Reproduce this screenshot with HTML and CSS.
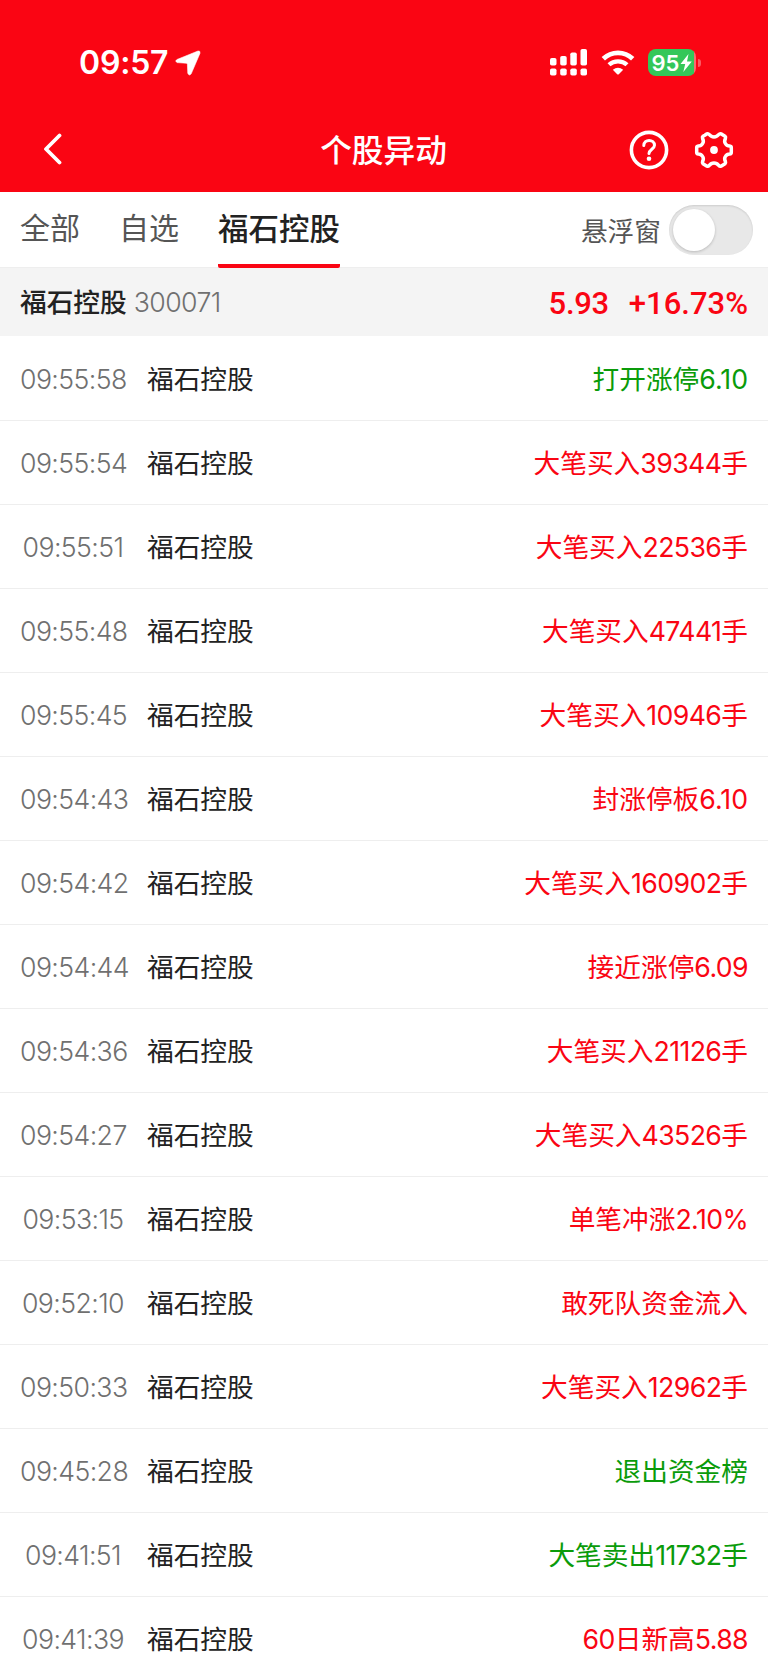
FILE: index.html
```html
<!DOCTYPE html>
<html lang="zh-CN">
<head>
    <meta charset="UTF-8">
    <title>个股异动</title>
    <link rel="stylesheet" href="styles.css">
</head>
<body>
    <header class="header">
        <div class="status-bar">
            <div class="clock">
                <span>09:57</span>
                <svg width="26" height="26" viewBox="0 0 26 26"><path d="M23 1 L2 9.500 Q-.6 11 2 12.600 L11.200 13.200 Q12.300 13.300 12.400 14.400 L12.800 23.500 Q14.200 26.300 16.200 23.800 L25 3.200 Q25.400.400 23 1Z" fill="#fff" stroke="#fff" stroke-width=".6"/></svg>
            </div>
            <div class="indicators">
                <svg class="signal" width="38" height="27" viewBox="0 0 38 27" fill="#fff">
                    <rect x="0" y="9" width="6.500" height="7.500" rx="1.800"/>
                    <rect x="10.200" y="7" width="6.500" height="9.500" rx="1.800"/>
                    <rect x="20.300" y="3.500" width="6.500" height="13" rx="1.800"/>
                    <rect x="30.500" y="0" width="6.500" height="16.500" rx="1.800"/>
                    <rect x="0" y="19.500" width="6.500" height="7" rx="1.800"/>
                    <rect x="10.200" y="19.500" width="6.500" height="7" rx="1.800"/>
                    <rect x="20.300" y="19.500" width="6.500" height="7" rx="1.800"/>
                    <rect x="30.500" y="19.500" width="6.500" height="7" rx="1.800"/>
                </svg>
                <svg class="wifi" width="34" height="26" viewBox="0 0 34 26">
                    <path d="M2.300 8.800 C10.500.800 23.500.800 31.700 8.800" fill="none" stroke="#fff" stroke-width="4.800"/>
                    <path d="M8 14.800 C13 10.100 21 10.100 26 14.800" fill="none" stroke="#fff" stroke-width="4.300"/>
                    <path d="M11.800 19.800 Q17 15.500 22.200 19.800 L17.800 24.200 Q17 25 16.200 24.200Z" fill="#fff"/>
                </svg>
                <div class="battery">
                    <span>95</span>
                    <svg width="12" height="18" viewBox="0 0 12 18"><path d="M8.500 0 L.5 10 H5.200 L3.300 18 L11.800 7.500 H7Z" fill="#fff"/></svg>
                </div>
                <i class="battery-cap"></i>
            </div>
        </div>
        <div class="nav">
            <svg class="back" width="20" height="34" viewBox="0 0 20 34"><path d="M17.500 2.500 L4 16 L17.500 29.500" fill="none" stroke="#fff" stroke-width="3.800" stroke-linecap="round" stroke-linejoin="round"/></svg>
            <h1>个股异动</h1>
            <div class="nav-actions">
                <svg width="40" height="40" viewBox="0 0 40 40" fill="none" stroke="#fff" stroke-linecap="round">
                    <circle cx="20" cy="20" r="17.600" stroke-width="3.600"/>
                    <path d="M14.800 15.600 C14.800 8.500 25.500 9 25.500 15.300 C25.500 19.300 20 19.200 20 23.600" stroke-width="3"/>
                    <circle cx="20" cy="28.700" r="2.300" fill="#fff" stroke="none"/>
                </svg>
                <svg width="40" height="40" viewBox="0 0 40 40">
                    <path d="M10.800 5.200 L13 3.800 Q14.200 3.300 15.300 4.600 Q17 7 20 7 Q23 7 24.700 4.600 Q25.800 3.300 27 3.800 L31 6.200 Q32 7 31.400 8.600 Q29.900 11.500 31.400 13.600 Q33 16 35.600 16 Q37.300 16.300 37.300 17.600 V22.400 Q37.300 23.700 35.600 24 Q33 24 31.400 26.400 Q29.900 28.500 31.400 31.400 Q32 33 31 33.800 L27 36.200 Q25.800 36.700 24.700 35.400 Q23 33 20 33 Q17 33 15.300 35.400 Q14.200 36.700 13 36.200 L9 33.800 Q8 33 8.600 31.400 Q10.100 28.500 8.600 26.400 Q7 24 4.400 24 Q2.700 23.700 2.700 22.400 V17.600 Q2.700 16.300 4.400 16 Q7 16 8.600 13.600 Q10.100 11.500 8.600 8.600 Q8 7 9 6.200Z" fill="none" stroke="#fff" stroke-width="3.500" stroke-linejoin="round"/>
                    <circle cx="20" cy="20" r="3.900" fill="#fff"/>
                </svg>
            </div>
        </div>
    </header>

    <div class="tabs">
        <div class="tab">全部</div>
        <div class="tab">自选</div>
        <div class="tab active">福石控股</div>
        <div class="float-switch">
            <span>悬浮窗</span>
            <div class="switch"></div>
        </div>
    </div>

    <div class="stock">
        <span class="stock-name">福石控股</span>
        <span class="stock-code">300071</span>
        <span class="stock-price">5.93</span>
        <span class="stock-change">+16.73%</span>
    </div>

    <div class="list">
        <div class="row"><span class="time">09:55:58</span><span class="name">福石控股</span><span class="event down">打开涨停6.10</span></div>
        <div class="row"><span class="time">09:55:54</span><span class="name">福石控股</span><span class="event">大笔买入<span class="num">39344</span>手</span></div>
        <div class="row"><span class="time">09:55:51</span><span class="name">福石控股</span><span class="event">大笔买入<span class="num">22536</span>手</span></div>
        <div class="row"><span class="time">09:55:48</span><span class="name">福石控股</span><span class="event">大笔买入<span class="num">47441</span>手</span></div>
        <div class="row"><span class="time">09:55:45</span><span class="name">福石控股</span><span class="event">大笔买入<span class="num">10946</span>手</span></div>
        <div class="row"><span class="time">09:54:43</span><span class="name">福石控股</span><span class="event">封涨停板6.10</span></div>
        <div class="row"><span class="time">09:54:42</span><span class="name">福石控股</span><span class="event">大笔买入<span class="num">160902</span>手</span></div>
        <div class="row"><span class="time">09:54:44</span><span class="name">福石控股</span><span class="event">接近涨停<span class="num">6.09</span></span></div>
        <div class="row"><span class="time">09:54:36</span><span class="name">福石控股</span><span class="event">大笔买入<span class="num">21126</span>手</span></div>
        <div class="row"><span class="time">09:54:27</span><span class="name">福石控股</span><span class="event">大笔买入<span class="num">43526</span>手</span></div>
        <div class="row"><span class="time">09:53:15</span><span class="name">福石控股</span><span class="event">单笔冲涨<span class="num">2.10%</span></span></div>
        <div class="row"><span class="time">09:52:10</span><span class="name">福石控股</span><span class="event">敢死队资金流入</span></div>
        <div class="row"><span class="time">09:50:33</span><span class="name">福石控股</span><span class="event">大笔买入<span class="num">12962</span>手</span></div>
        <div class="row"><span class="time">09:45:28</span><span class="name">福石控股</span><span class="event down">退出资金榜</span></div>
        <div class="row"><span class="time">09:41:51</span><span class="name">福石控股</span><span class="event down">大笔卖出<span class="num">11732</span>手</span></div>
        <div class="row"><span class="time">09:41:39</span><span class="name">福石控股</span><span class="event"><span class="num">60</span>日新高<span class="num">5.88</span></span></div>
    </div>
</body>
</html>
```

FILE: styles.css
```css
* {
    box-sizing: border-box;
}
body {
    margin: 0;
    height: 1670px;
    overflow: hidden;
    background-color: #fff;
    color: #222;
    font-family: Inter, "Noto Sans CJK SC", sans-serif;
    font-size: 26.7px;
}
svg {
    display: block;
    flex: none;
}
.header {
    height: 192px;
    background-color: #fa0513;
    color: #fff;
}
.status-bar {
    display: flex;
    justify-content: space-between;
    height: 108px;
    padding: 17px 67px 0 79px;
}
.clock, .indicators {
    display: flex;
    align-items: center;
}
.clock {
    font-size: 32px;
    font-weight: 600;
    letter-spacing: -0.2px;
    gap: 7px;
}
.wifi {
    margin: 0 13px 0 14px;
}
.signal {
    margin-right: -1px;
}
.battery {
    display: flex;
    align-items: center;
    justify-content: center;
    gap: 1px;
    width: 48px;
    height: 27px;
    border-radius: 8px;
    background: linear-gradient(to right, #34c759 46px, #fb6871 46px);
    font-size: 22px;
    font-weight: 600;
}
.battery-cap {
    width: 3px;
    height: 8px;
    margin-left: 2px;
    border-radius: 0 3px 3px 0;
    background-color: #fb5a63;
}
.nav {
    display: flex;
    align-items: center;
    height: 84px;
    padding: 0 34px 0 42px;
}
.nav h1 {
    flex: 1;
    margin: 0;
    padding: 0 0 5px 76px;
    font-size: 31.7px;
    font-weight: 500;
    text-align: center;
}
.nav-actions {
    display: flex;
    gap: 25px;
}
.tabs {
    display: flex;
    height: 76px;
    padding: 0 15px 0 20px;
    gap: 39px;
    border-bottom: 1px solid #eee;
}
.tab {
    height: 76px;
    font-size: 30px;
    line-height: 73px;
    color: #555;
}
.tab.active {
    font-weight: 500;
    color: #222;
    font-size: 30.5px;
    border-bottom: 4px solid #fa0513;
    border-radius: 2px;
}
.float-switch {
    display: flex;
    align-items: center;
    gap: 8px;
    margin-left: auto;
    color: #555;
}
.switch {
    width: 84px;
    height: 50px;
    padding: 4px;
    border-radius: 25px;
    background-color: #e8e8e8;
    box-shadow: inset 0 1px 2px rgba(0,0,0,0.12);
}
.switch::before {
    content: "";
    display: block;
    width: 42px;
    height: 42px;
    border-radius: 50%;
    background-color: #fff;
    box-shadow: 0 1px 3px rgba(0,0,0,0.2);
}
.stock {
    display: flex;
    align-items: center;
    height: 68px;
    padding: 0 20px;
    background-color: #f4f4f4;
    line-height: 36px;
}
.stock-name {
    font-weight: 500;
}
.stock-code {
    margin-left: 7px;
    font-weight: 300;
    letter-spacing: -0.6px;
    color: #707070;
}
.stock-price, .stock-change {
    padding-top: 4px;
    font-family: Roboto, sans-serif;
    font-size: 31px;
    font-weight: 500;
    color: #fa0513;
}
.stock-price {
    margin-left: auto;
    letter-spacing: -0.3px;
}
.stock-change {
    margin-left: 20px;
}
.list {
    padding-top: 1px;
}
.row {
    display: flex;
    align-items: center;
    height: 84px;
    padding: 0 20px;
    border-bottom: 1px solid #eee;
    line-height: 36px;
}
.time {
    width: 106px;
    margin-right: 21px;
    text-align: center;
    white-space: nowrap;
    font-weight: 300;
    letter-spacing: -0.6px;
    color: #707070;
}
.event {
    margin-left: auto;
    color: #fa0513;
}
.event.down {
    color: #0a9b0a;
}
.num {
    letter-spacing: -0.6px;
}
```
